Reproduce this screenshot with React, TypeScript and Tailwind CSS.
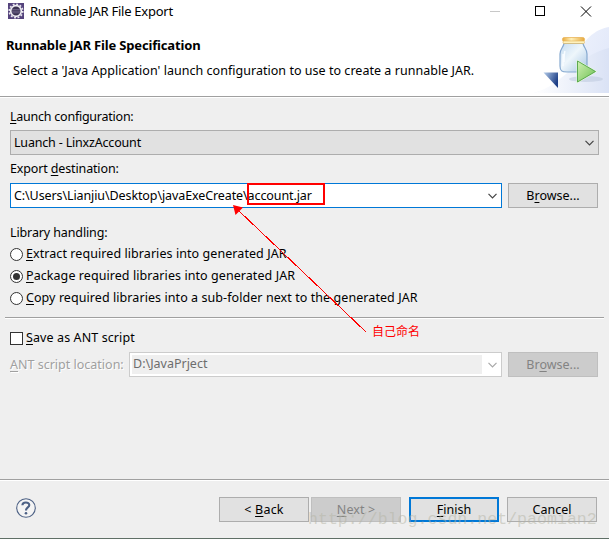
import React from "react"
import clsx from "clsx"

type ButtonProps = {
  children: React.ReactNode
  disabled?: boolean
  primary?: boolean
}

function Button({ children, disabled, primary }: ButtonProps) {
  return (
    <button
      disabled={disabled}
      className={clsx(
        "flex h-[25px] w-[90px] shrink-0 items-center justify-center whitespace-nowrap",
        disabled && "border border-[#bfbfbf] bg-[#cccccc] text-[#838383]",
        primary && "border-2 border-[#0078d7] bg-[#e1e1e1]",
        !disabled && !primary && "border border-[#adadad] bg-[#e1e1e1]"
      )}
    >
      {children}
    </button>
  )
}

function Key({ children }: { children: React.ReactNode }) {
  return <span className="underline decoration-1 underline-offset-2">{children}</span>
}

function Chevron({ className = "" }: { className?: string }) {
  return (
    <svg width="9" height="6" viewBox="0 0 9 6" fill="none" className={clsx("shrink-0", className)}>
      <path d="M0.5 0.8 L4.5 4.8 L8.5 0.8" stroke="currentColor" strokeWidth="1.2" />
    </svg>
  )
}

function Radio({ checked, children }: { checked?: boolean; children: React.ReactNode }) {
  return (
    <label className="flex h-[22px] items-center gap-[3px] whitespace-nowrap">
      <span className="flex size-[13px] items-center justify-center rounded-full border border-[#333333] bg-white">
        {checked && <span className="size-[7px] rounded-full bg-[#333333]" />}
      </span>
      <span className="tracking-[0.07px]">{children}</span>
    </label>
  )
}

function Separator() {
  return <div className="h-[2px] shrink-0 border-t border-[#a0a0a0] bg-white" />
}

function EclipseIcon() {
  return (
    <svg width="16" height="16" viewBox="0 0 16 16">
      <rect width="16" height="16" fill="#54437c" />
      <circle cx="8" cy="8" r="6.8" fill="none" stroke="#e8e6ee" strokeWidth="1.6" strokeDasharray="1.9 1.66" />
      <circle cx="8" cy="8" r="5.3" fill="#3a3151" stroke="#efeef3" strokeWidth="1.7" />
      <path d="M4 6.6h8M3.7 8.2h8.6M4.2 9.8h7.6" stroke="#8b82a8" strokeWidth="0.6" />
    </svg>
  )
}

function JarBanner() {
  return (
    <svg width="75" height="68" viewBox="0 0 75 68" className="block">
      <defs>
        <linearGradient id="fade" x1="0" y1="0" x2="1" y2="0">
          <stop offset="0" stopColor="#fff" />
          <stop offset="1" stopColor="#dae2f5" />
        </linearGradient>
        <linearGradient id="sky" x1="0" y1="0" x2="1" y2="0.3">
          <stop offset="0" stopColor="#f7f9fe" />
          <stop offset="1" stopColor="#e4eafa" />
        </linearGradient>
        <linearGradient id="glass" x1="0" y1="0" x2="1" y2="1">
          <stop offset="0" stopColor="#c5dcf1" />
          <stop offset="0.45" stopColor="#eef6fb" />
          <stop offset="1" stopColor="#a6c5e4" />
        </linearGradient>
        <linearGradient id="lid" x1="0" y1="0" x2="1" y2="0">
          <stop offset="0" stopColor="#e9a93c" />
          <stop offset="0.4" stopColor="#fff0b8" />
          <stop offset="1" stopColor="#e6a83e" />
        </linearGradient>
        <linearGradient id="corner" x1="0" y1="0" x2="1" y2="0.5">
          <stop offset="0" stopColor="#b5cdea" />
          <stop offset="1" stopColor="#1d3e86" />
        </linearGradient>
        <linearGradient id="play" x1="0" y1="0" x2="1" y2="1">
          <stop offset="0" stopColor="#d2f1b5" />
          <stop offset="1" stopColor="#6cc050" />
        </linearGradient>
      </defs>
      <path d="M0 68 C20 62 36 54 43 32 C48 16 61 4 75 2 V68Z" fill="url(#sky)" />
      <path d="M0 68 C30 60 41 31 75 23 V68Z" fill="url(#fade)" />
      <ellipse cx="52" cy="54" rx="17" ry="3" fill="#bfcbe0" opacity="0.6" />
      <path
        d="M30 18.5H49C50 23 53 24 53 29V41C53 46 50 47 46 47H33C28 47 26 46 26 41V29C26 24 29 23 30 18.5Z"
        fill="url(#glass)"
        stroke="#86a9d0"
        strokeWidth="1.2"
      />
      <path d="M29 29V41M31 26C30 29 30 33 30 37" stroke="#f8fcff" strokeWidth="1.5" fill="none" />
      <rect x="28.5" y="12.5" width="22" height="4" rx="1.7" fill="url(#lid)" stroke="#e7ae4a" strokeWidth="0.7" />
      <rect x="29" y="16" width="21.5" height="2.5" rx="1" fill="#fff2bd" stroke="#ddb35b" strokeWidth="0.6" />
      <path d="M43.5 36 L61.5 46.5 L43.5 57Z" fill="url(#play)" stroke="#e7f7df" strokeWidth="2" />
      <path d="M43.5 36 L61.5 46.5 L43.5 57Z" fill="url(#play)" stroke="#4fa343" strokeWidth="0.9" />
      <path d="M9.5 47.5H24V63Z" fill="url(#corner)" />
    </svg>
  )
}

function TitleBar() {
  return (
    <div className="flex h-[25px] items-start justify-between pl-2">
      <div className="flex gap-[6px] pt-[3px]">
        <EclipseIcon />
        <span className="h-4 text-[13px] leading-4 tracking-[-0.26px]">Runnable JAR File Export</span>
      </div>
      <svg width="119" height="24" viewBox="490 0 119 24" fill="none" stroke="#000">
        <path d="M490 11.5h10" stroke="#c8c8c8" />
        <rect x="535.5" y="6.5" width="9" height="9" />
        <path d="M581 6.5l10 10M591 6.5l-10 10" />
      </svg>
    </div>
  )
}

export default function App() {
  return (
    <div className="relative flex h-[539px] w-[609px] flex-col overflow-hidden border-b border-[#5f6f66] bg-[#efefef] font-['Noto_Sans','Noto_Sans_CJK_SC',sans-serif] text-[12.5px] leading-[16px] text-black">
      <header className="flex h-24 shrink-0 flex-col bg-white">
        <TitleBar />
        <div className="flex justify-between">
          <div className="pt-[12px] pl-[6px] whitespace-nowrap">
            <h1 className="text-[13px] font-bold tracking-[-0.16px]">Runnable JAR File Specification</h1>
            <p className="mt-[10px] pl-[7px] tracking-[0.03px]">
              Select a 'Java Application' launch configuration to use to create a runnable JAR.
            </p>
          </div>
          <JarBanner />
        </div>
      </header>
      <Separator />

      <main className="flex flex-col">
        <section className="flex flex-col px-[10px] pt-[11px]">
          <label className="h-[21px] tracking-[-0.24px]">
            <Key>L</Key>aunch configuration:
          </label>
          <div className="flex h-[25px] items-center justify-between border border-[#adadad] bg-[#e1e1e1] pr-1 pl-[3px]">
            <span className="tracking-[-0.18px]">Luanch - LinxzAccount</span>
            <Chevron className="text-[#444444]" />
          </div>
          <label className="mt-[6px] h-[22px] tracking-[-0.14px]">
            Export <Key>d</Key>estination:
          </label>
          <div className="flex gap-[6px]">
            <div className="flex h-[25px] w-[492px] items-center justify-between border border-[#0078d7] bg-white pr-1 pl-[3px]">
              <span className="tracking-[-0.1px]">C:\Users\Lianjiu\Desktop\javaExeCreate\account.jar</span>
              <Chevron className="text-[#444444]" />
            </div>
            <Button>
              <span>
                B<Key>r</Key>owse...
              </span>
            </Button>
          </div>
        </section>

        <section className="px-[10px] pt-[17px] pb-[7px]">
          <p className="h-[18px] tracking-[-0.12px]">Library handling:</p>
          <Radio>
            <Key>E</Key>xtract required libraries into generated JAR
          </Radio>
          <Radio checked>
            <Key>P</Key>ackage required libraries into generated JAR
          </Radio>
          <Radio>
            <Key>C</Key>opy required libraries into a sub-folder next to the generated JAR
          </Radio>
        </section>
        <div className="mx-[5px] pt-px">
          <Separator />
        </div>

        <section className="px-[10px] pt-[9px]">
          <label className="flex h-5 items-center gap-[3px]">
            <span className="size-[13px] border border-[#333333] bg-white" />
            <span className="tracking-[0.1px]">
              <Key>S</Key>ave as ANT script
            </span>
          </label>
          <div className="mt-1 flex items-center">
            <span className="w-[119px] whitespace-nowrap text-[#a0a0a0] [text-shadow:1px_1px_0_#fff]">
              <Key>A</Key>NT script location:
            </span>
            <div className="flex h-[25px] w-[373px] items-center justify-between border border-[#cccccc] bg-white pr-1 pl-[2px] text-[#6d6d6d]">
              <span className="h-[19px] w-[350px] bg-[#efefef] pl-[1px] leading-[17px]">D:\JavaPrject</span>
              <Chevron className="text-[#a8a8a8]" />
            </div>
            <div className="ml-[6px]">
              <Button disabled>
                <span>
                  Br<Key>o</Key>wse...
                </span>
              </Button>
            </div>
          </div>
        </section>
      </main>

      <footer className="mt-auto h-[59px] shrink-0">
        <Separator />
        <div className="flex items-start pt-4 pr-3 pl-4">
          <svg width="20" height="20" viewBox="0 0 20 20" fill="none" stroke="#4d6185" className="mt-px">
            <circle cx="10" cy="10" r="9.3" fill="#f4f4f4" strokeWidth="1.1" />
            <path d="M6.4 7.3 C6.4 3.6 13.3 3.5 13.3 7 C13.3 9.5 10 9.3 10 12.4" strokeWidth="2.1" />
            <circle cx="10" cy="15.3" r="1.3" fill="#4d6185" stroke="none" />
          </svg>
          <div className="ml-auto flex">
            <div className="mr-2 flex gap-[2px]">
              <Button>
                <span className="tracking-[0.2px]">
                  &lt; <Key>B</Key>ack
                </span>
              </Button>
              <Button disabled>
                <span className="tracking-[0.1px]">
                  <Key>N</Key>ext &gt;
                </span>
              </Button>
            </div>
            <div className="flex gap-2">
              <Button primary>
                <span>
                  <Key>F</Key>inish
                </span>
              </Button>
              <Button>Cancel</Button>
            </div>
          </div>
        </div>
      </footer>

      {/* annotation over the file name */}
      <div className="absolute top-[183px] left-[247px] h-[22px] w-[78px] border-2 border-[#ff0000]" />
      <svg className="absolute top-0 left-0" width="609" height="539" fill="none">
        <path d="M238 210 L366 332" stroke="#ff0000" strokeWidth="1" shapeRendering="crispEdges" />
        <path d="M233 205 L243 207.5 L235.5 215Z" fill="#ff0000" />
      </svg>
      <span className="absolute top-[323px] left-[372px] text-[12px] whitespace-nowrap text-[#ff0000] font-['Noto_Sans_CJK_SC',sans-serif]">
        自己命名
      </span>
      <span className="absolute top-[510px] left-[308px] font-['Liberation_Mono',monospace] text-[16.6px] leading-5 whitespace-nowrap text-[#b4b4a4]/50">
        http://blog.csdn.net/paomian2
      </span>
    </div>
  )
}
